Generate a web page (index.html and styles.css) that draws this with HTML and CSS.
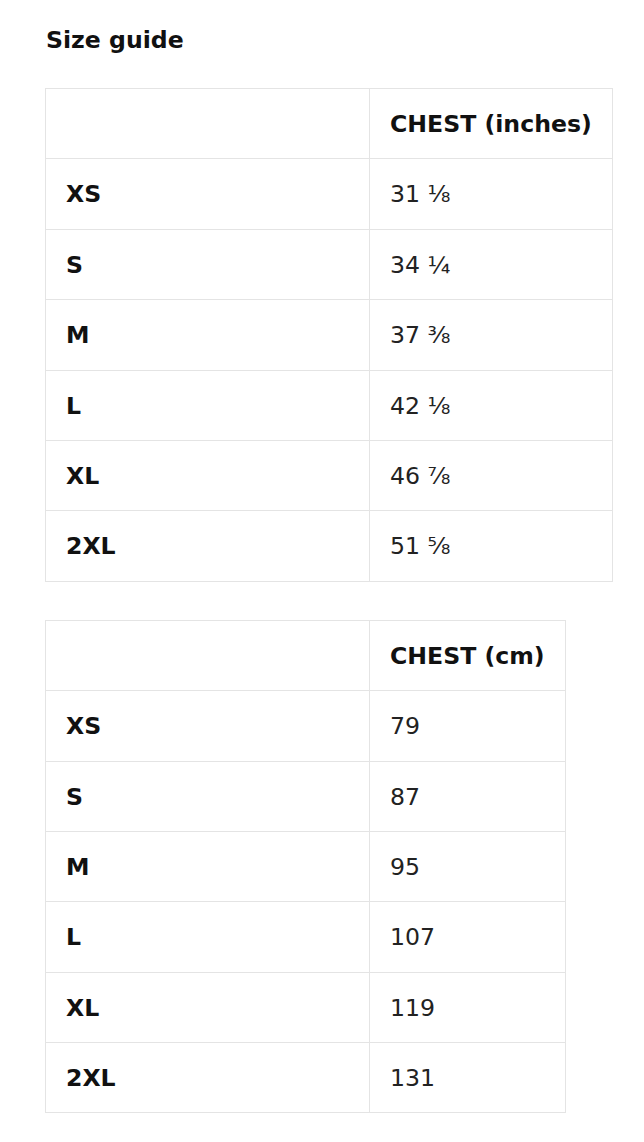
FILE: index.html
```html
<!DOCTYPE html>
<html>
<head>
<meta charset="utf-8">
<link rel="stylesheet" href="styles.css">
</head>
<body>
<div class="page">
  <h2 class="title">Size guide</h2>
  <table class="sizes">
    <tr><th class="label"></th><th class="val">CHEST (inches)</th></tr>
    <tr><th class="label">XS</th><td>31 ⅛</td></tr>
    <tr><th class="label">S</th><td>34 ¼</td></tr>
    <tr><th class="label">M</th><td>37 ⅜</td></tr>
    <tr><th class="label">L</th><td>42 ⅛</td></tr>
    <tr><th class="label">XL</th><td>46 ⅞</td></tr>
    <tr><th class="label">2XL</th><td>51 ⅝</td></tr>
  </table>
  <table class="sizes">
    <tr><th class="label"></th><th class="val">CHEST (cm)</th></tr>
    <tr><th class="label">XS</th><td>79</td></tr>
    <tr><th class="label">S</th><td>87</td></tr>
    <tr><th class="label">M</th><td>95</td></tr>
    <tr><th class="label">L</th><td>107</td></tr>
    <tr><th class="label">XL</th><td>119</td></tr>
    <tr><th class="label">2XL</th><td>131</td></tr>
  </table>
</div>
</body>
</html>
```
FILE: styles.css
```css
html, body {
  margin: 0;
  padding: 0;
  background: #ffffff;
}
body {
  font-family: "DejaVu Sans", Verdana, sans-serif;
  color: #111111;
}
.page {
  padding: 26px 0 0 45px;
}
.title {
  margin: 0 0 33px 1px;
  font-size: 23.6px;
  line-height: 29px;
  font-weight: bold;
}
.sizes {
  border-collapse: collapse;
  margin-bottom: 38px;
  font-size: 23.6px;
}
.sizes th, .sizes td {
  border: 1px solid #e4e4e4;
  padding: 21px 20px 19.4px;
  line-height: 29px;
  height: 29px;
  text-align: left;
  vertical-align: middle;
}
.sizes th {
  font-weight: bold;
}
.sizes td {
  font-weight: normal;
  color: #222;
}
.sizes .label {
  width: 283px;
}
```
